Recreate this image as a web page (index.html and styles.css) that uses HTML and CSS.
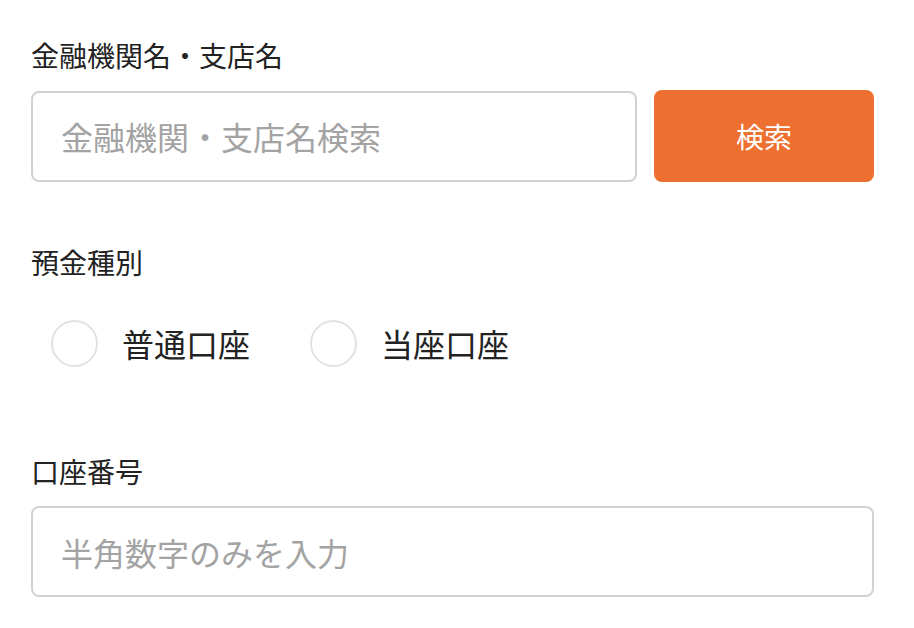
FILE: index.html
```html
<!DOCTYPE html>
<html lang="ja">
<head>
    <meta charset="UTF-8" />
    <meta name="viewport" content="width=device-width, initial-scale=1.0" />
    <title>口座登録</title>
    <link rel="stylesheet" href="styles.css">
</head>
<body>
    <form class="form">
        <div class="field">
            <label class="label" for="bank">金融機関名・支店名</label>
            <div class="search-row">
                <input id="bank" class="input" type="text" placeholder="金融機関・支店名検索">
                <button type="button" class="btn-search">検索</button>
            </div>
        </div>

        <div class="field field-type">
            <span class="label">預金種別</span>
            <div class="radio-row">
                <label class="radio">
                    <input type="radio" name="type" value="futsu">
                    <span class="radio-mark"></span>
                    <span class="radio-text">普通口座</span>
                </label>
                <label class="radio">
                    <input type="radio" name="type" value="toza">
                    <span class="radio-mark"></span>
                    <span class="radio-text">当座口座</span>
                </label>
            </div>
        </div>

        <div class="field field-number">
            <label class="label" for="number">口座番号</label>
            <input id="number" class="input" type="text" inputmode="numeric" placeholder="半角数字のみを入力">
        </div>
    </form>
</body>
</html>
```

FILE: styles.css
```css
body {
    margin: 0;
    padding: 0;
    background: #ffffff;
    font-family: "Noto Sans CJK JP", "Noto Sans", sans-serif;
    color: #222222;
}

.form {
    width: 843px;
    padding: 35px 0 0 31px;
}

.field {
    display: flex;
    flex-direction: column;
}

.label {
    font-size: 28px;
    line-height: 40px;
    color: #222222;
}

.search-row {
    display: flex;
    align-items: center;
    gap: 17px;
    margin-top: 15px;
}

.input {
    box-sizing: border-box;
    height: 91px;
    padding: 0 28px;
    border: 2px solid #d2d2d2;
    border-radius: 8px;
    font-family: inherit;
    font-size: 32px;
    color: #222222;
    background: #ffffff;
    outline: none;
}

.input::placeholder {
    color: #a3a3a3;
}

.search-row .input {
    flex: 1;
}

.btn-search {
    width: 220px;
    height: 92px;
    border: none;
    border-radius: 8px;
    background: #ee7031;
    color: #ffffff;
    font-family: inherit;
    font-size: 28px;
    cursor: pointer;
}

.field-type {
    margin-top: 60px;
}

.radio-row {
    display: flex;
    align-items: center;
    gap: 60px;
    margin-top: 38px;
    padding-left: 20px;
}

.radio {
    display: flex;
    align-items: center;
    gap: 24px;
    cursor: pointer;
}

.radio input {
    display: none;
}

.radio-mark {
    box-sizing: border-box;
    width: 47px;
    height: 47px;
    border: 2px solid #e2e2e2;
    border-radius: 50%;
    background: #ffffff;
}

.radio input:checked + .radio-mark {
    border: 14px solid #ee7031;
}

.radio-text {
    font-size: 32px;
    line-height: 47px;
    color: #222222;
}

.field-number {
    margin-top: 84px;
}

.field-number .input {
    margin-top: 15px;
    width: 843px;
}
```
